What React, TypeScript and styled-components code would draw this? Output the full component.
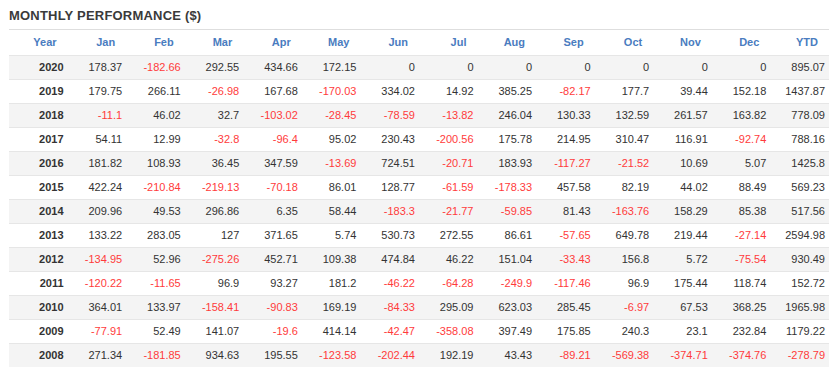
import styled, { createGlobalStyle } from "styled-components";

const GlobalStyle = createGlobalStyle`
  html, body {
    margin: 0;
    padding: 0;
    background: #fff;
  }
  body {
    font-family: "Liberation Sans", Arial, sans-serif;
  }
`;

const MONTHS = ["Jan", "Feb", "Mar", "Apr", "May", "Jun", "Jul", "Aug", "Sep", "Oct", "Nov", "Dec"];

const rows: [string, string[]][] = [
  ["2020", ["178.37", "-182.66", "292.55", "434.66", "172.15", "0", "0", "0", "0", "0", "0", "0", "895.07"]],
  ["2019", ["179.75", "266.11", "-26.98", "167.68", "-170.03", "334.02", "14.92", "385.25", "-82.17", "177.7", "39.44", "152.18", "1437.87"]],
  ["2018", ["-11.1", "46.02", "32.7", "-103.02", "-28.45", "-78.59", "-13.82", "246.04", "130.33", "132.59", "261.57", "163.82", "778.09"]],
  ["2017", ["54.11", "12.99", "-32.8", "-96.4", "95.02", "230.43", "-200.56", "175.78", "214.95", "310.47", "116.91", "-92.74", "788.16"]],
  ["2016", ["181.82", "108.93", "36.45", "347.59", "-13.69", "724.51", "-20.71", "183.93", "-117.27", "-21.52", "10.69", "5.07", "1425.8"]],
  ["2015", ["422.24", "-210.84", "-219.13", "-70.18", "86.01", "128.77", "-61.59", "-178.33", "457.58", "82.19", "44.02", "88.49", "569.23"]],
  ["2014", ["209.96", "49.53", "296.86", "6.35", "58.44", "-183.3", "-21.77", "-59.85", "81.43", "-163.76", "158.29", "85.38", "517.56"]],
  ["2013", ["133.22", "283.05", "127", "371.65", "5.74", "530.73", "272.55", "86.61", "-57.65", "649.78", "219.44", "-27.14", "2594.98"]],
  ["2012", ["-134.95", "52.96", "-275.26", "452.71", "109.38", "474.84", "46.22", "151.04", "-33.43", "156.8", "5.72", "-75.54", "930.49"]],
  ["2011", ["-120.22", "-11.65", "96.9", "93.27", "181.2", "-46.22", "-64.28", "-249.9", "-117.46", "96.9", "175.44", "118.74", "152.72"]],
  ["2010", ["364.01", "133.97", "-158.41", "-90.83", "169.19", "-84.33", "295.09", "623.03", "285.45", "-6.97", "67.53", "368.25", "1965.98"]],
  ["2009", ["-77.91", "52.49", "141.07", "-19.6", "414.14", "-42.47", "-358.08", "397.49", "175.85", "240.3", "23.1", "232.84", "1179.22"]],
  ["2008", ["271.34", "-181.85", "934.63", "195.55", "-123.58", "-202.44", "192.19", "43.43", "-89.21", "-569.38", "-374.71", "-374.76", "-278.79"]],
];

const Panel = styled.section`
  padding: 0 9px;
  width: 820px;
`;

const Title = styled.h3`
  margin: 0;
  padding: 9px 0 0;
  height: 20px;
  font-size: 13px;
  font-weight: bold;
  letter-spacing: 0.2px;
  line-height: 14px;
  color: #3a3a3a;
  text-transform: uppercase;
  border-bottom: 1px solid #dedede;
`;

const Table = styled.table`
  width: 820px;
  table-layout: fixed;
  border-collapse: collapse;
  font-size: 11px;
  color: #333;
`;

const HeadCell = styled.th`
  height: 25px;
  padding: 0 11px 0 0;
  text-align: right;
  font-weight: bold;
  color: #4a7cc0;
  line-height: 13px;
`;

const Row = styled.tr<{ $striped: boolean }>`
  background: ${(p) => (p.$striped ? "#f4f4f4" : "#fff")};
  border-top: 1px solid #e6e6e6;
`;

const YearCell = styled.td`
  height: 23px;
  padding: 0 4px 0 0;
  text-align: right;
  font-weight: bold;
  line-height: 13px;
`;

const ValueCell = styled.td<{ $negative: boolean }>`
  height: 23px;
  padding: 0 4px 0 0;
  text-align: right;
  line-height: 13px;
  color: ${(p) => (p.$negative ? "#ff3b3b" : "#333")};
`;

export default function App() {
  return (
    <>
      <GlobalStyle />
      <Panel>
        <Title>Monthly Performance ($)</Title>
        <Table>
          <thead>
            <tr>
              <HeadCell>Year</HeadCell>
              {MONTHS.map((m) => (
                <HeadCell key={m}>{m}</HeadCell>
              ))}
              <HeadCell>YTD</HeadCell>
            </tr>
          </thead>
          <tbody>
            {rows.map(([year, values], i) => (
              <Row key={year} $striped={i % 2 === 0}>
                <YearCell>{year}</YearCell>
                {values.map((v, j) => (
                  <ValueCell key={j} $negative={v.startsWith("-")}>
                    {v}
                  </ValueCell>
                ))}
              </Row>
            ))}
          </tbody>
        </Table>
      </Panel>
    </>
  );
}
